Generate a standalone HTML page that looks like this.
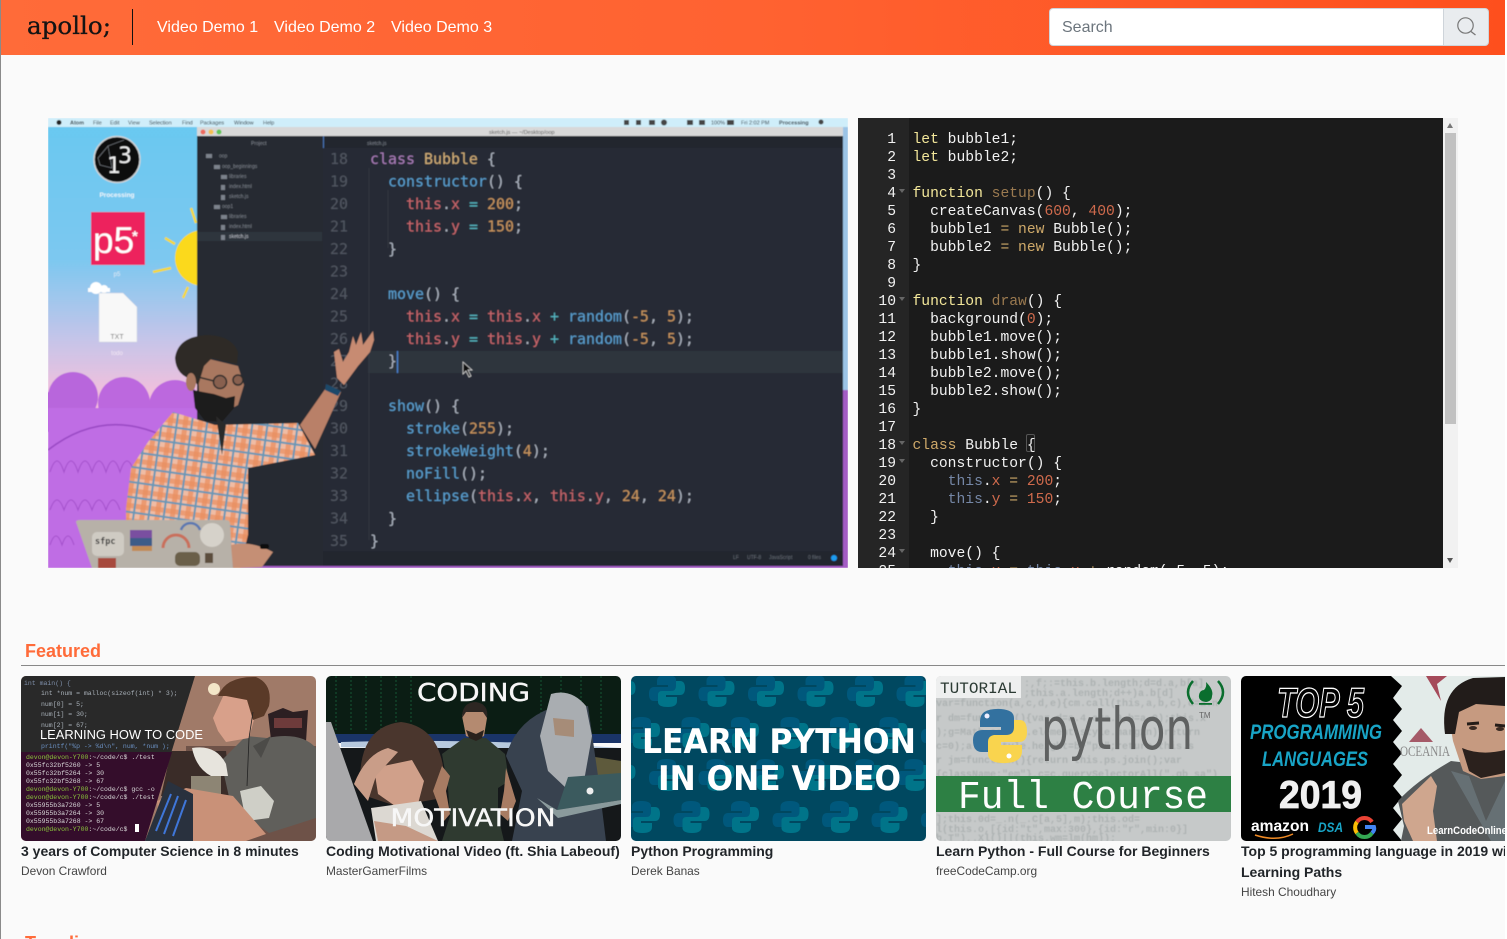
<!DOCTYPE html>
<html lang="en">
<head>
<meta charset="utf-8">
<title>apollo;</title>
<style>
html,body{margin:0;padding:0;width:1507px;height:939px;overflow:hidden;background:#fff;font-family:"Liberation Sans",sans-serif}
#page{position:absolute;left:0;top:0;width:1505px;height:939px;background:#fafafa;overflow:hidden}
#leftline{position:absolute;left:0;top:0;width:1px;height:939px;background:#8a8a8a;z-index:5}
#nav{position:absolute;left:0;top:0;width:1505px;height:55px;background:linear-gradient(90deg,#ff6b39 0%,#ff6231 50%,#fe4f1d 100%)}
#nav a{position:absolute;top:18px;color:#fff;font-size:16px;line-height:20px;text-decoration:none;white-space:nowrap}
#sep{position:absolute;left:132px;top:9px;width:1px;height:36px;background:#111}
#search{position:absolute;left:1049px;top:8px;width:395px;height:38px;box-sizing:border-box;background:#fff;border:1px solid #ced4da;border-right:0;border-radius:4px 0 0 4px;color:#6c757d;font-size:16px;line-height:37px;padding-left:12px}
#sbtn{position:absolute;left:1443px;top:8px;width:46px;height:38px;box-sizing:border-box;background:#e9ecef;border:1px solid #ced4da;border-radius:0 4px 4px 0}
#video{position:absolute;left:48px;top:118px;width:800px;height:450px;display:block}
#code{position:absolute;left:858px;top:118px;width:600px;height:450px;background:#1b1b1b;overflow:hidden}
#gutter{position:absolute;left:0;top:0;width:51px;height:450px;background:#252525}
#code pre{position:absolute;margin:0;top:13px;font-family:"Liberation Mono",monospace;font-size:14.67px;line-height:18px;color:#f2f2f2}
#nums{left:0;width:38px;text-align:right;color:#dedede}
#src{left:54.5px}
.k{color:#f3e79a}.f{color:#9b7a50}.n{color:#cf6a4c}.o{color:#cda869}.t{color:#7587a6}
.fold{position:absolute;left:41px;width:0;height:0;border-left:3px solid transparent;border-right:3px solid transparent;border-top:4px solid #666}
#br{position:absolute;left:168px;top:316px;width:7px;height:16px;border:1px solid #555;border-radius:2px}
#sb{position:absolute;left:585px;top:0;width:15px;height:450px;background:#f1f1f1}
#sb i{position:absolute;left:2px;top:15px;width:11px;height:291px;background:#c1c1c1}
#sb b{position:absolute;left:4px;width:0;height:0;border-left:3.5px solid transparent;border-right:3.5px solid transparent}
#h1,#h2{position:absolute;left:25px;color:#ff6b39;font-size:18px;font-weight:bold;line-height:22px;margin:0}
#h1{top:640px}
#h2{top:932px}
#rule{position:absolute;left:21px;top:665px;width:1484px;height:1px;background:#888}
.card{position:absolute;top:676px;width:295px}
.card svg{display:block;border-radius:5px}
.card .t1{font-size:14px;font-weight:bold;line-height:21px;color:#212529;margin-top:0}
.card .t2{font-size:11.9px;line-height:14px;color:#444;margin-top:2px}
</style>
</head>
<body>
<div id="page">
<div id="nav">
  <svg style="position:absolute;left:20px;top:5px" width="100" height="45" viewBox="0 0 100 45"><text x="7" y="29" font-family="'DejaVu Serif',serif" font-size="24" fill="#141414" stroke="#141414" stroke-width=".3" textLength="84" lengthAdjust="spacingAndGlyphs">apollo;</text></svg>
  <div id="sep"></div>
  <a style="left:157px">Video Demo 1</a>
  <a style="left:274px">Video Demo 2</a>
  <a style="left:391px">Video Demo 3</a>
  <div id="search">Search</div>
  <div id="sbtn"><svg width="44" height="36" viewBox="0 0 44 36" style="position:absolute;left:0;top:0"><circle cx="21.500" cy="16.500" r="7.700" fill="none" stroke="#777" stroke-width="1.200"/><path d="M27 22.500 L31.500 26" stroke="#777" stroke-width="1.300" fill="none"/></svg></div>
</div>

<svg id="video" viewBox="48 118 800 450" xmlns="http://www.w3.org/2000/svg">
<defs>
  <linearGradient id="sky" gradientUnits="userSpaceOnUse" x1="0" y1="118" x2="0" y2="400"><stop offset="0" stop-color="#69c9f1"/><stop offset=".5" stop-color="#7cc8f0"/><stop offset=".78" stop-color="#c4c5e9"/><stop offset="1" stop-color="#f7bfdb"/></linearGradient>
  <pattern id="plaid" width="15" height="15" patternUnits="userSpaceOnUse" patternTransform="rotate(8)">
    <rect width="15" height="15" fill="#f0bca4"/>
    <rect x="0" width="5" height="15" fill="#e98f60" opacity=".75"/>
    <rect y="0" width="15" height="5" fill="#e98f60" opacity=".7"/>
    <rect x="8" width="2" height="15" fill="#6a97b6"/>
    <rect y="8" width="15" height="2" fill="#6a97b6"/>
  </pattern>
  <filter id="soft" x="-2%" y="-2%" width="104%" height="104%"><feGaussianBlur stdDeviation=".45"/></filter>
  <filter id="soft2" x="-2%" y="-2%" width="104%" height="104%"><feGaussianBlur stdDeviation=".5"/></filter>
</defs>
<g filter="url(#soft)">
<rect x="48" y="118" width="800" height="450" fill="url(#sky)"/>
<!-- hills -->
<circle cx="73" cy="397" r="25" fill="#b866dc"/><circle cx="124" cy="403" r="26" fill="#bc68de"/><circle cx="175" cy="406" r="26" fill="#bc68de"/><circle cx="46" cy="412" r="20" fill="#b866dc"/>
<path d="M48 408 H208 V568 H48 Z" fill="#bf6de4"/>
<path d="M48 450 Q110 402 180 445" fill="none" stroke="#9a49c4" stroke-width="1.600"/>
<path d="M50 472 q7 -22 14 0 q7 -22 14 0 q7 -22 14 0 q7 -22 14 0 q7 -22 14 0 q7 -22 14 0" fill="none" stroke="#a451cc" stroke-width="1.100"/>
<path d="M50 510 q7 -20 14 0 q7 -20 14 0 q7 -20 14 0 q7 -20 14 0 q7 -20 14 0" fill="none" stroke="#a451cc" stroke-width="1.100"/>
<path d="M50 545 q6 -18 12 0 q6 -18 12 0" fill="none" stroke="#a451cc" stroke-width="1.100"/>
<!-- sun -->
<circle cx="203" cy="258" r="28" fill="#fbd91f"/>
<path d="M165 238 L175 244 M153 272 L171 268 M183 298 L188 287 M191 208 L196 223" stroke="#f5d838" stroke-width="2.500"/>
<!-- processing icon -->
<circle cx="117" cy="159.500" r="23" fill="#0d0d0f" stroke="#cfd3d6" stroke-width="1.500"/>
<path d="M98 158 L108 146 L112 168 L100 165 Z M108 146 L124 140" stroke="#7a7f85" stroke-width=".6" fill="none"/>
<text x="107" y="173" font-family="'DejaVu Sans',sans-serif" font-size="22" fill="#f0f0f0">1</text>
<text x="118" y="163" font-family="'DejaVu Sans',sans-serif" font-size="22" fill="#f0f0f0">3</text>
<text x="117" y="197" text-anchor="middle" font-family="'Liberation Sans',sans-serif" font-size="6.500" font-weight="bold" fill="#eef6fb">Processing</text>
<!-- p5 -->
<rect x="91" y="212" width="54" height="53" fill="#ed225d"/>
<text x="93" y="253" font-family="'Liberation Sans',sans-serif" font-size="37" fill="#fff">p5</text>
<text x="132" y="241" font-family="'Liberation Sans',sans-serif" font-weight="bold" font-size="15" fill="#fff">*</text>
<text x="117" y="276" text-anchor="middle" font-family="'Liberation Sans',sans-serif" font-size="6" fill="#dfeaf5">p5</text>
<!-- doc -->
<circle cx="96" cy="288" r="6" fill="#fff"/><circle cx="104" cy="289" r="4" fill="#fff"/><rect x="88" y="288" width="22" height="4" fill="#fff"/>
<path d="M99 293 L123 293 L137 307 L137 342 L99 342 Z" fill="#f8f8f8" stroke="#d0d4e0" stroke-width=".5"/>
<text x="117" y="339" text-anchor="middle" font-family="'Liberation Sans',sans-serif" font-size="7" fill="#777">TXT</text>
<text x="117" y="355" text-anchor="middle" font-family="'Liberation Sans',sans-serif" font-size="6" fill="#f4e9f5">todo</text>
<!-- menu bar -->
<rect x="48" y="118" width="800" height="9" fill="#cfeefa"/>
<g font-family="'Liberation Sans',sans-serif" font-size="5.500" fill="#27323a">
<text x="70" y="124.500" font-weight="bold">Atom</text><text x="93" y="124.500">File</text><text x="110" y="124.500">Edit</text><text x="128" y="124.500">View</text><text x="149" y="124.500">Selection</text><text x="182" y="124.500">Find</text><text x="200" y="124.500">Packages</text><text x="234" y="124.500">Window</text><text x="263" y="124.500">Help</text>
<text x="711" y="124.500">100%</text><text x="741" y="124.500">Fri 2:02 PM</text><text x="779" y="124.500" font-weight="bold">Processing</text>
</g>
<circle cx="59" cy="122.500" r="2.500" fill="#222"/>
<g fill="#444"><rect x="624" y="120" width="5" height="5"/><rect x="636" y="120" width="5" height="5"/><rect x="649" y="120" width="6" height="5"/><circle cx="664" cy="122.500" r="3"/><rect x="687" y="120" width="6" height="5"/><rect x="699" y="120" width="6" height="5"/><rect x="727" y="120" width="7" height="5"/><circle cx="821" cy="122" r="2.500"/></g>
<!-- window -->
<rect x="197" y="127" width="651" height="441" fill="#9cc4e6"/>
<rect x="843" y="390" width="5" height="178" fill="#a35cc4"/>
<rect x="197" y="127" width="646" height="9" fill="#d8d8d8"/>
<circle cx="203" cy="132" r="2.500" fill="#ed6a5e"/><circle cx="211" cy="132" r="2.500" fill="#f4bf4f"/><circle cx="219" cy="132" r="2.500" fill="#61c554"/>
<text x="489" y="134" font-family="'Liberation Sans',sans-serif" font-size="5.500" fill="#555">sketch.js — ~/Desktop/oop</text>
<rect x="197" y="136" width="646" height="430" fill="#282c34"/>
<rect x="197" y="136" width="126" height="432" fill="#272b32"/>
<rect x="197" y="566" width="651" height="2" fill="#a35cc4"/>
<rect x="323" y="136" width="520" height="12" fill="#23272e"/>
<rect x="323" y="136" width="1" height="12" fill="#4a76b8"/>
<rect x="197" y="232" width="125" height="9" fill="#2f343d"/>
<g font-family="'Liberation Sans',sans-serif" font-size="5" fill="#7c828c">
<text x="251" y="145">Project</text><text x="367" y="145">sketch.js</text>
<text x="219" y="157.500">oop</text><text x="222" y="168">oop_beginnings</text><text x="229" y="178">libraries</text><text x="229" y="188">index.html</text><text x="229" y="198">sketch.js</text><text x="222" y="208">oop1</text><text x="229" y="218">libraries</text><text x="229" y="228">index.html</text><text x="229" y="238" fill="#c0c5cc">sketch.js</text>
</g>
<g fill="#7c828c"><rect x="206" y="154" width="6" height="4"/><rect x="214" y="165" width="6" height="4"/><rect x="221" y="175" width="6" height="4"/><rect x="221" y="185" width="4" height="5"/><rect x="221" y="195" width="4" height="5"/><rect x="214" y="205" width="6" height="4"/><rect x="221" y="215" width="6" height="4"/><rect x="221" y="225" width="4" height="5"/><rect x="221" y="235" width="4" height="5"/></g>
<!-- current line -->
<rect x="368" y="351" width="475" height="22" fill="#2f343e"/>
<path d="M397.500 351 V373" stroke="#4a86d8" stroke-width="1.300"/>
<path d="M369 168 V540 M388 190 V248" stroke="#343944" stroke-width=".8"/>
<rect x="323" y="551" width="520" height="15" fill="#23272e"/>
<g font-family="'Liberation Sans',sans-serif" font-size="5" fill="#666c76"><text x="733" y="559">LF</text><text x="747" y="559">UTF-8</text><text x="769" y="559">JavaScript</text><text x="808" y="559">0 files</text></g>
<circle cx="834" cy="558" r="3" fill="#1d9bf0"/>
<!-- code -->
<g font-family="'DejaVu Sans Mono',monospace" font-size="14.950" fill="#abb2bf">
<g fill="#515762"><text x="330" y="164">18</text><text x="330" y="186.500">19</text><text x="330" y="209">20</text><text x="330" y="231.400">21</text><text x="330" y="253.900">22</text><text x="330" y="276.400">23</text><text x="330" y="298.800">24</text><text x="330" y="321.300">25</text><text x="330" y="343.800">26</text><text x="330" y="366.200">27</text><text x="330" y="388.700">28</text><text x="330" y="411.200">29</text><text x="330" y="433.600">30</text><text x="330" y="456.100">31</text><text x="330" y="478.600">32</text><text x="330" y="501">33</text><text x="330" y="523.500">34</text><text x="330" y="546">35</text></g>
<text x="370" y="164"><tspan fill="#a87cb8">class</tspan> <tspan fill="#d2ae78">Bubble</tspan> {</text>
<text x="388" y="186.500"><tspan fill="#5a9fd0">constructor</tspan>() {</text>
<text x="406" y="209"><tspan fill="#c8666c">this</tspan>.<tspan fill="#c8666c">x</tspan> <tspan fill="#56b6c2">=</tspan> <tspan fill="#c9955f">200</tspan>;</text>
<text x="406" y="231.400"><tspan fill="#c8666c">this</tspan>.<tspan fill="#c8666c">y</tspan> <tspan fill="#56b6c2">=</tspan> <tspan fill="#c9955f">150</tspan>;</text>
<text x="388" y="253.900">}</text>
<text x="388" y="298.800"><tspan fill="#5a9fd0">move</tspan>() {</text>
<text x="406" y="321.300"><tspan fill="#c8666c">this</tspan>.<tspan fill="#c8666c">x</tspan> <tspan fill="#56b6c2">=</tspan> <tspan fill="#c8666c">this</tspan>.<tspan fill="#c8666c">x</tspan> <tspan fill="#56b6c2">+</tspan> <tspan fill="#5a9fd0">random</tspan>(<tspan fill="#c9955f">-5</tspan>, <tspan fill="#c9955f">5</tspan>);</text>
<text x="406" y="343.800"><tspan fill="#c8666c">this</tspan>.<tspan fill="#c8666c">y</tspan> <tspan fill="#56b6c2">=</tspan> <tspan fill="#c8666c">this</tspan>.<tspan fill="#c8666c">y</tspan> <tspan fill="#56b6c2">+</tspan> <tspan fill="#5a9fd0">random</tspan>(<tspan fill="#c9955f">-5</tspan>, <tspan fill="#c9955f">5</tspan>);</text>
<text x="388" y="366.200">}</text>
<text x="388" y="411.200"><tspan fill="#5a9fd0">show</tspan>() {</text>
<text x="406" y="433.600"><tspan fill="#5a9fd0">stroke</tspan>(<tspan fill="#c9955f">255</tspan>);</text>
<text x="406" y="456.100"><tspan fill="#5a9fd0">strokeWeight</tspan>(<tspan fill="#c9955f">4</tspan>);</text>
<text x="406" y="478.600"><tspan fill="#5a9fd0">noFill</tspan>();</text>
<text x="406" y="501"><tspan fill="#5a9fd0">ellipse</tspan>(<tspan fill="#c8666c">this</tspan>.<tspan fill="#c8666c">x</tspan>, <tspan fill="#c8666c">this</tspan>.<tspan fill="#c8666c">y</tspan>, <tspan fill="#c9955f">24</tspan>, <tspan fill="#c9955f">24</tspan>);</text>
<text x="388" y="523.500">}</text>
<text x="370" y="546">}</text>
</g>
<path d="M463 362 L463 374 L466 371 L469 377 L471 376 L468 370 L472 370 Z" fill="#111" stroke="#ddd" stroke-width=".7"/>
<!-- person -->
<path d="M173 412 L215 425 L298 423 L315 455 L248 468 L248 535 L240 568 L126 568 L126 508 L131 468 L148 442 Z" fill="url(#plaid)"/>
<path d="M300 425 L315 449 L341 392 L328 385 Z" fill="#b98068"/>
<path d="M326 384 L341 391 L338 396 L325 390 Z" fill="#1f4a6b"/>
<path d="M337 378 L334 352 L339 349 L343 362 L349 352 L353 336 L356 345 L361 332 L363 345 L373 331 L374 340 L370 352 L358 366 L344 385 Z" fill="#c78b72"/>
<path d="M198 372 L205 358 L238 366 L244 385 L238 405 L220 415 L200 408 Z" fill="#a97860"/>
<path d="M194 380 Q176 376 175 358 Q178 336 208 335 Q232 336 238 352 L237 364 L212 358 L204 366 L198 386 Z" fill="#2e2a27"/>
<ellipse cx="191" cy="382" rx="5" ry="9" fill="#a97860"/>
<path d="M193 390 L203 392 L214 394 L226 398 L235 396 L234 408 L222 422 L205 421 L195 408 Z" fill="#1f1b1a"/>
<circle cx="220" cy="382" r="6.500" fill="#3a2e2a" fill-opacity=".3" stroke="#2a2a2a" stroke-width="1.500"/><circle cx="238" cy="380" r="5" fill="#3a2e2a" fill-opacity=".3" stroke="#2a2a2a" stroke-width="1.500"/><path d="M198 377 L214 381" stroke="#2a2a2a" stroke-width="1.500"/>
<path d="M216 416 L222 455 L226 425 Z" fill="#2a2a2a"/>
<!-- laptop -->
<path d="M76 522 Q76 520 80 520 L226 520 Q230 520 230 524 L233 568 L92 568 Z" fill="#b7b1a8"/>
<rect x="92" y="532" width="32" height="24" rx="5" fill="#cfcbc3"/>
<text x="95" y="544" font-family="'DejaVu Sans Mono',monospace" font-size="8.500" font-weight="bold" fill="#333">sfpc</text>
<rect x="130" y="530" width="22" height="8" fill="#7a4fa0"/><rect x="130" y="538" width="22" height="8" fill="#3e5b88"/><rect x="132" y="546" width="20" height="5" fill="#c28b54"/>
<path d="M163 548 a13 13 0 0 1 26 0" fill="none" stroke="#c96f5b" stroke-width="3"/><path d="M181 530 a10 10 0 0 1 19 0" fill="none" stroke="#5b78b0" stroke-width="2.500"/>
<circle cx="212" cy="535" r="12" fill="#d6d2ca"/><rect x="175" y="552" width="25" height="14" rx="5" fill="#6b5f48"/><rect x="98" y="558" width="18" height="10" fill="#a7493e"/><rect x="205" y="553" width="8" height="10" fill="#5b4e3e"/>
<path d="M231 545 Q250 540 273 552 L262 567 L233 568 Z" fill="#c58f75"/>
<rect x="260" y="544" width="9" height="5" rx="2" fill="#111"/>
</g>
</svg>

<div id="code">
<div id="gutter"></div>
<pre id="nums">1
2
3
4
5
6
7
8
9
10
11
12
13
14
15
16
17
18
19
20
21
22
23
24
25</pre>
<i class="fold" style="top:71px"></i><i class="fold" style="top:179px"></i><i class="fold" style="top:323px"></i><i class="fold" style="top:341px"></i><i class="fold" style="top:431px"></i>
<div id="br"></div>
<pre id="src"><span class="k">let</span> bubble1;
<span class="k">let</span> bubble2;

<span class="k">function</span> <span class="f">setup</span>() {
  createCanvas(<span class="n">600</span>, <span class="n">400</span>);
  bubble1 <span class="o">=</span> <span class="o">new</span> Bubble();
  bubble2 <span class="o">=</span> <span class="o">new</span> Bubble();
}

<span class="k">function</span> <span class="f">draw</span>() {
  background(<span class="n">0</span>);
  bubble1.move();
  bubble1.show();
  bubble2.move();
  bubble2.show();
}

<span class="o">class</span> Bubble {
  constructor() {
    <span class="t">this</span>.<span class="n">x</span> <span class="o">=</span> <span class="n">200</span>;
    <span class="t">this</span>.<span class="n">y</span> <span class="o">=</span> <span class="n">150</span>;
  }

  move() {
    <span class="t">this</span>.<span class="n">x</span> <span class="o">=</span> <span class="t">this</span>.<span class="n">x</span> <span class="o">+</span> random(-5, 5);</pre>
<div id="sb"><b style="top:5px;border-bottom:5px solid #777"></b><i></i><b style="bottom:5px;border-top:5px solid #555"></b></div>
</div>

<h2 id="h1">Featured</h2>
<div id="rule"></div>

<!-- card 1 -->
<div class="card" style="left:21px">
<svg width="295" height="165" viewBox="0 0 295 165" font-family="'Liberation Mono',monospace">
<rect width="295" height="165" fill="#a07a68"/>
<rect x="165" y="70" width="130" height="95" fill="#6e5248"/>
<path d="M150 75 H205 L210 120 H140 Z" fill="#3a2c28"/>
<circle cx="193" cy="13" r="6" fill="#f3e6c8"/>
<path d="M247 38 L262 32 L272 36 L287 34 L285 66 L250 64 Z" fill="#2c1f22"/><rect x="253" y="42" width="28" height="10" fill="#6e3b3b"/>
<path d="M170 100 H200 V120 H170 Z" fill="#8d8574"/>
<path d="M225 60 L246 62 Q280 55 295 72 L295 142 L270 150 L248 157 L210 130 L200 85 Z" fill="#605f5b"/>
<path d="M219 115 L240 110 L253 125 L248 142 L225 145 Z" fill="#cfcfc7"/>
<path d="M232 70 L250 60 L240 82 Z" fill="#4c4b48"/>
<path d="M205 14 L192 42 L197 55 L205 66 L228 62 L234 40 L225 18 Z" fill="#d8a08a"/>
<path d="M197 20 Q205 0 235 1 Q252 8 248 30 L243 40 L232 44 L226 24 L205 20 Z" fill="#5a3a28"/>
<path d="M232 36 L228 62 L226 110" fill="none" stroke="#222" stroke-width=".8"/>
<path d="M136 125 L165 112 L212 120 L245 158 L225 165 L140 165 Z" fill="#c99178"/>
<path d="M0 0 H174 L143 100 H0 Z" fill="#292929"/>
<path d="M0 76 H151 L124 165 H0 Z" fill="#340d2b"/>
<path d="M124 165 L147 105 L172 118 L172 165 Z" fill="#29313e"/>
<path d="M135 155 L150 118 M143 158 L157 120 M152 160 L165 124" stroke="#3f76d8" stroke-width="2"/>
<path d="M171 72 Q195 68 205 88 L207 100 L190 100 Q175 92 171 72 Z" fill="#e7e4dd"/>
<g font-size="6.500" fill="#a8b0b8">
<text x="3" y="9" fill="#7e8ea8">int main() {</text>
<text x="20" y="19">int *num = malloc(sizeof(int) * 3);</text>
<text x="20" y="30">num[0] = 5;</text>
<text x="20" y="40">num[1] = 30;</text>
<text x="20" y="51">num[2] = 67;</text>
<text x="20" y="72" fill="#6a8fc0">printf("%p -&gt; %d\n", num, *num );</text>
</g>
<text x="19" y="63" font-family="'Liberation Sans',sans-serif" font-size="13" fill="#fff" textLength="163" lengthAdjust="spacingAndGlyphs">LEARNING HOW TO CODE</text>
<g font-size="6.500" fill="#d8d8d8">
<text x="5" y="83"><tspan fill="#8ac43c">devon@devon-Y700</tspan>:~/code/c$ ./test</text>
<text x="5" y="91">0x55fc32bf5260 -&gt; 5</text><text x="5" y="99">0x55fc32bf5264 -&gt; 30</text><text x="5" y="107">0x55fc32bf5268 -&gt; 67</text>
<text x="5" y="115"><tspan fill="#8ac43c">devon@devon-Y700</tspan>:~/code/c$ gcc -o</text>
<text x="5" y="123"><tspan fill="#8ac43c">devon@devon-Y700</tspan>:~/code/c$ ./test</text>
<text x="5" y="131">0x55955b3a7260 -&gt; 5</text><text x="5" y="139">0x55955b3a7264 -&gt; 30</text><text x="5" y="147">0x55955b3a7268 -&gt; 67</text>
<text x="5" y="155"><tspan fill="#8ac43c">devon@devon-Y700</tspan>:~/code/c$</text>
</g>
<rect x="114" y="148" width="4" height="8" fill="#fff"/>
</svg>
<div class="t1">3 years of Computer Science in 8 minutes</div>
<div class="t2">Devon Crawford</div>
</div>

<!-- card 2 -->
<div class="card" style="left:326px">
<svg width="295" height="165" viewBox="0 0 295 165">
<rect width="295" height="66" fill="#0b1d14"/>
<rect y="58" width="295" height="9" fill="#1a3468"/>
<path d="M15 66 Q150 62 295 72 L295 76 L15 71 Z" fill="#b7c9de"/>
<rect y="72" width="295" height="93" fill="#15181a"/>
<path d="M250 78 L295 85 L295 110 L250 110 Z" fill="#5e5a3c"/>
<g stroke="#12452a" stroke-width="1.500" stroke-dasharray="2 2"><path d="M10 0 V55 M25 0 V55 M40 0 V55 M55 0 V55 M70 0 V55 M85 0 V55 M215 0 V55 M235 0 V55 M255 0 V55 M275 0 V55"/></g>
<!-- woman -->
<path d="M34 100 Q36 50 75 46 Q110 50 117 90 L117 122 L70 130 L40 120 Z" fill="#4a362d"/>
<path d="M48 92 L86 84 L98 105 L92 128 L72 132 L52 118 Z" fill="#d0a08a"/>
<path d="M28 108 Q40 78 62 72 L72 76 L50 100 L42 125 Z" fill="#c99d88"/>
<path d="M45 132 L95 125 L112 165 L50 165 Z" fill="#dcd8d2"/>
<path d="M48 145 L80 150 L112 165 L52 165 Z" fill="#c59a85"/>
<!-- laptop left -->
<path d="M0 46 L5 46 L47 165 L0 165 Z" fill="#a9a9ab"/>
<!-- Shia -->
<path d="M116 78 L138 62 L160 62 L179 78 L183 105 L172 112 L172 140 L178 165 L116 165 L124 140 L122 112 Z" fill="#2f3a30"/>
<path d="M116 90 L107 115 L118 145 L124 138 L120 115 L124 100 Z" fill="#a87c63"/>
<path d="M180 92 L190 125 L182 145 L174 138 L178 115 Z" fill="#a87c63"/>
<path d="M136 40 Q138 27 150 27 Q162 28 161 42 L158 60 L150 64 L140 60 Z" fill="#b48a70"/>
<path d="M136 42 Q136 26 150 26 Q163 28 161 42 L157 36 L140 36 Z" fill="#2d2622"/>
<path d="M140 54 L150 58 L158 54 L156 62 L150 65 L143 62 Z" fill="#2a221d"/>
<!-- gandalf -->
<path d="M180 80 Q190 45 225 32 L262 30 L272 100 L280 165 L186 165 L196 115 Z" fill="#38424f"/>
<path d="M225 18 Q245 12 260 30 L266 60 L258 105 L240 112 L222 95 L214 60 Z" fill="#a9adb1"/>
<path d="M227 42 L248 44 L248 61 L229 59 Z" fill="#a68c78"/>
<path d="M231 134 L242 101 L295 97 L295 124 Z" fill="#3b5a5e"/>
<path d="M211 122 L231 134 L295 124 L295 128 L232 142 Z" fill="#8a9a9c"/>
<circle cx="264" cy="115" r="3.500" fill="#eee"/>
<text x="147.500" y="25" text-anchor="middle" font-family="'DejaVu Sans',sans-serif" font-size="25" fill="#f7f7f7" stroke="#f7f7f7" stroke-width=".4" textLength="113" lengthAdjust="spacingAndGlyphs">CODING</text>
<text x="147" y="150" text-anchor="middle" font-family="'DejaVu Sans',sans-serif" font-size="24" fill="#f7f7f7" stroke="#f7f7f7" stroke-width=".4" textLength="165" lengthAdjust="spacingAndGlyphs">MOTIVATION</text>
</svg>
<div class="t1" style="white-space:nowrap">Coding Motivational Video (ft. Shia Labeouf)</div>
<div class="t2">MasterGamerFilms</div>
</div>

<!-- card 3 -->
<div class="card" style="left:631px">
<svg width="295" height="165" viewBox="0 0 295 165">
<defs>
<pattern id="py" width="49.500" height="84" patternUnits="userSpaceOnUse" x="11" y="-6">
<g transform="translate(25 21)"><path d="M-1 -16 Q-10 -16 -10 -10 V-6 H1 V-4 H-13 Q-18 -4 -18 3 Q-18 10 -13 10 H-9 V5 Q-9 0 -4 0 H5 Q9 0 9 -4 V-11 Q9 -16 -1 -16 Z" fill="#00587c"/><path transform="rotate(180)" d="M-1 -16 Q-10 -16 -10 -10 V-6 H1 V-4 H-13 Q-18 -4 -18 3 Q-18 10 -13 10 H-9 V5 Q-9 0 -4 0 H5 Q9 0 9 -4 V-11 Q9 -16 -1 -16 Z" fill="#007489"/></g>
<g transform="translate(0 63)"><path d="M-1 -16 Q-10 -16 -10 -10 V-6 H1 V-4 H-13 Q-18 -4 -18 3 Q-18 10 -13 10 H-9 V5 Q-9 0 -4 0 H5 Q9 0 9 -4 V-11 Q9 -16 -1 -16 Z" fill="#00587c"/><path transform="rotate(180)" d="M-1 -16 Q-10 -16 -10 -10 V-6 H1 V-4 H-13 Q-18 -4 -18 3 Q-18 10 -13 10 H-9 V5 Q-9 0 -4 0 H5 Q9 0 9 -4 V-11 Q9 -16 -1 -16 Z" fill="#007489"/></g>
<g transform="translate(49.500 63)"><path d="M-1 -16 Q-10 -16 -10 -10 V-6 H1 V-4 H-13 Q-18 -4 -18 3 Q-18 10 -13 10 H-9 V5 Q-9 0 -4 0 H5 Q9 0 9 -4 V-11 Q9 -16 -1 -16 Z" fill="#00587c"/><path transform="rotate(180)" d="M-1 -16 Q-10 -16 -10 -10 V-6 H1 V-4 H-13 Q-18 -4 -18 3 Q-18 10 -13 10 H-9 V5 Q-9 0 -4 0 H5 Q9 0 9 -4 V-11 Q9 -16 -1 -16 Z" fill="#007489"/></g>
</pattern>
</defs>
<rect width="295" height="165" fill="#004860"/>
<rect width="295" height="165" fill="url(#py)"/>
<text x="11" y="77" font-family="'DejaVu Sans',sans-serif" font-weight="bold" font-size="34" fill="#fff" textLength="274" lengthAdjust="spacingAndGlyphs">LEARN PYTHON</text>
<text x="27" y="114" font-family="'DejaVu Sans',sans-serif" font-weight="bold" font-size="34" fill="#fff" textLength="243" lengthAdjust="spacingAndGlyphs">IN ONE VIDEO</text>
</svg>
<div class="t1">Python Programming</div>
<div class="t2">Derek Banas</div>
</div>

<!-- card 4 -->
<div class="card" style="left:936px">
<svg width="295" height="165" viewBox="0 0 295 165">
<rect width="295" height="165" fill="#c6c9c9"/>
<g font-family="'Liberation Mono',monospace" font-size="10" font-weight="bold" fill="#adb2b2" filter="url(#soft2)">
<text x="88" y="10">:,f;:=this.b.length;d=d.a,b[a]</text>
<text x="88" y="20">;this.a.length;d++)a.b[d]</text>
<text x="0" y="30">var=function(a,c,d,e){cm.call(this,a,b,c),d=a.n</text>
<text x="0" y="45">r dm=function(){var d=a.4,c=a.9,b=a.0);this.x</text>
<text x="0" y="59">);g=Math.ceil(a.element.style.margin);return</text>
<text x="0" y="73">c=0);a.el.style.height=b+"px";return this.s</text>
<text x="0" y="87">r jm=function(){return this.ps.join();var</text>
<text x="0" y="101">{className:"em"},c=c.querySelectorAll(".gb_sa")</text>
<text x="0" y="115">&amp;&amp;(f=new im(f,b,c,d),e.a.b.push(f),b.a.f))</text>
<text x="0" y="129">em("gb_ea"),jm(c,"gb_zc"),jm("gb_ze"),c)</text>
<text x="0" y="146">];this.0d=_.n(_.C[a,5],m);this.od=</text>
<text x="0" y="156">l(this.o,[{id:"t",max:300},{id:"r",min:0}]</text>
<text x="0" y="165">b.T"),.Xl()||(this.wm=lm(hm));</text>
</g>
<rect x="0" y="0" width="85" height="22" fill="#eeefef"/>
<text x="4" y="17" font-family="'Liberation Mono',monospace" font-size="16" fill="#2b3a33" textLength="77" lengthAdjust="spacingAndGlyphs">TUTORIAL</text>
<text x="105" y="73" font-family="'DejaVu Sans',sans-serif" font-size="58" fill="#5f6161" textLength="152" lengthAdjust="spacingAndGlyphs">python</text>
<text x="263" y="42" font-family="'Liberation Sans',sans-serif" font-size="8" fill="#666">TM</text>
<path d="M65 33 Q44 32 44 45 V51 H65 V54 H47 Q37 54 37 64 Q37 76 46 76 H52 V69 Q52 61 60 61 H72 Q78 60 78 54 V42 Q78 34 65 33 Z" fill="#33719f"/>
<circle cx="51" cy="40" r="2.500" fill="#eef"/>
<path d="M65 87 Q86 88 86 75 V69 H65 V66 H83 Q91 66 91 56 Q91 44 84 44 H78 V51 Q78 59 70 59 H58 Q52 60 52 66 V78 Q52 86 65 87 Z" fill="#f9d44e"/>
<circle cx="73" cy="80" r="2.500" fill="#fff"/>
<rect x="0" y="100" width="295" height="36" fill="#2d8044"/>
<text x="22" y="132" font-family="'Liberation Mono',monospace" font-size="40" fill="#fdfdfd" textLength="250" lengthAdjust="spacingAndGlyphs">Full Course</text>
<g fill="none" stroke="#0a6e2e" stroke-width="2.500"><path d="M257 5 Q247 16 257 28"/><path d="M282 5 Q292 16 282 28"/></g>
<path d="M270 6 Q278 14 276 20 Q276 25 270 26 Q262 25 263 19 Q264 14 268 14 Q271 11 270 6 Z" fill="#0a6e2e"/>
<rect x="263" y="27" width="13" height="1.800" fill="#0a6e2e"/>
</svg>
<div class="t1">Learn Python - Full Course for Beginners</div>
<div class="t2">freeCodeCamp.org</div>
</div>

<!-- card 5 -->
<div class="card" style="left:1241px">
<svg width="295" height="165" viewBox="0 0 295 165">
<rect width="295" height="165" fill="#e3ebe9"/>
<path d="M0 0 H150 L161 10 L152 22 L161 33 L152 44 L161 55 L152 66 L161 77 L152 88 L161 99 L152 110 L161 121 L152 132 L161 143 L152 154 L161 165 H0 Z" fill="#000"/>
<path d="M185 0 L200 25 L196 8 L206 0 Z" fill="#a54a5a"/>
<path d="M168 66 L180 52 L192 66 Z" fill="#a55a68"/>
<text x="159" y="80" font-family="'Liberation Serif',serif" font-size="15" fill="#8a8a8a" textLength="50" lengthAdjust="spacingAndGlyphs">OCEANIA</text>
<path d="M157 125 Q175 105 210 85 L295 95 L295 165 L160 165 L163 150 Z" fill="#55595a"/>
<path d="M210 95 L228 100 L245 145 L264 105 L264 165 L250 165 Z" fill="#667074"/>
<path d="M206 30 L264 14 L270 60 L264 100 L240 103 L222 95 L212 65 Z" fill="#c69a80"/>
<path d="M204 58 Q198 12 232 2 L264 1 L264 30 L235 28 L218 36 L214 58 Z" fill="#221c1a"/>
<path d="M221 72 Q240 80 264 74 L264 97 L240 102 L228 95 Z" fill="#2b211d"/>
<path d="M226 48 L238 47 M254 49 L264 50" stroke="#241c18" stroke-width="3"/>
<ellipse cx="232" cy="52" rx="4" ry="2" fill="#3a2a22"/><ellipse cx="259" cy="53" rx="4" ry="2" fill="#3a2a22"/>
<path d="M161 128 L190 100 L196 110 L192 135 L196 165 L172 165 L163 145 Z" fill="#cfa68e"/>
<g font-family="'Liberation Sans',sans-serif">
<text x="36" y="41" font-size="42" font-style="italic" font-weight="bold" fill="#000" stroke="#fff" stroke-width="1.300" textLength="87" lengthAdjust="spacingAndGlyphs">TOP 5</text>
<text x="9" y="63" font-size="21" font-style="italic" font-weight="bold" fill="#18a4c6" textLength="132" lengthAdjust="spacingAndGlyphs">PROGRAMMING</text>
<text x="21" y="90" font-size="21" font-style="italic" font-weight="bold" fill="#18a4c6" textLength="106" lengthAdjust="spacingAndGlyphs">LANGUAGES</text>
<text x="38" y="132" font-size="39" font-weight="bold" fill="#f0f0f0" stroke="#f0f0f0" stroke-width=".8" textLength="83" lengthAdjust="spacingAndGlyphs">2019</text>
<text x="10" y="155" font-size="16" font-weight="bold" fill="#fff" textLength="58" lengthAdjust="spacingAndGlyphs">amazon</text>
<text x="77" y="156" font-size="14" font-style="italic" font-weight="bold" fill="#18a4c6" textLength="25" lengthAdjust="spacingAndGlyphs">DSA</text>
<text x="186" y="158" font-size="11" font-weight="bold" fill="#fff" textLength="80" lengthAdjust="spacingAndGlyphs">LearnCodeOnline</text>
</g>
<path d="M14 159 Q35 166 52 158" fill="none" stroke="#f08a24" stroke-width="1.500"/>
<g fill="none" stroke-width="4"><path d="M131 146 A9 9 0 0 0 116 146" stroke="#ea4335"/><path d="M116 146 A9 9 0 0 0 116 157" stroke="#fbbc05"/><path d="M116 157 A9 9 0 0 0 131 157" stroke="#34a853"/><path d="M131 157 Q134 154 133 151 H124" stroke="#4285f4"/></g>
</svg>
<div class="t1">Top 5 programming language in 2019 with Learning Paths</div>
<div class="t2">Hitesh Choudhary</div>
</div>

<h2 id="h2">Trending</h2>
<div id="leftline"></div>
</div>
</body>
</html>
